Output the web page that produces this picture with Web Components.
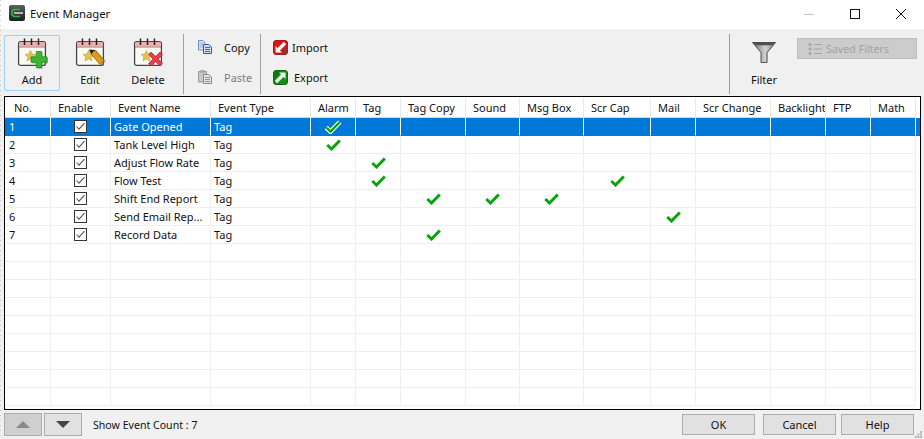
<!DOCTYPE html>
<html><head><meta charset="utf-8">
<style>
html,body{margin:0;padding:0;height:100%;background:#f0f0f0;overflow:hidden}
body{font:11px "Noto Sans","Open Sans",sans-serif;color:#111}
</style></head><body>
<event-manager></event-manager>
<script>
const CAL=`<rect x="1.6" y="3.6" width="26.800" height="23.800" rx="2" fill="#fbfbf6" stroke="#444" stroke-width="1.300"/><rect x="2.300" y="4.300" width="25.400" height="4.400" fill="#f4a9a9"/><path d="M2 9.100H28" stroke="#666" stroke-width=".7"/><path d="M7.500 .5v6.500M14.500 .5v6.500M21.500 .5v6.500" stroke="#222" stroke-width="1.500"/><path d="M13.500 12.500l1.700 3.500 3.800.5-2.800 2.600.8 3.800-3.500-1.900-3.500 1.900.8-3.800-2.800-2.600 3.800-.5z" fill="#e8c24a" stroke="#b3902a" stroke-width=".5"/>`;
const PLUS="M19.300 14h5.400v5.300H30v5.400h-5.300V30h-5.400v-5.300H14v-5.400h5.300z";
const ICONS={
add:`<svg width="31" height="31" viewBox="0 0 31 31">${CAL}<path d="${PLUS}" transform="translate(.8 .8)" fill="#777" opacity=".6"/><path d="${PLUS}" transform="translate(0 -.5)" fill="#3fb52f" stroke="#1f8a1f" stroke-width=".8"/></svg>`,
edit:`<svg width="31" height="31" viewBox="0 0 31 31">${CAL}<path d="M16.500 15l4-3.500 9.500 11-4.500 4.500z" transform="translate(.8 .8)" fill="#777" opacity=".5"/><path d="M16 16l4-4 9 10.500-4 4z" fill="#e39a12" stroke="#8a5a08" stroke-width=".8"/><path d="M16 16l-2-4.500 6 .5z" fill="#222"/></svg>`,
del:`<svg width="31" height="31" viewBox="0 0 31 31">${CAL}<path d="M16 16.500l2.500-2.500 4 4 4-4 2.500 2.500-4 4 4 4-2.500 2.500-4-4-4 4-2.500-2.500 4-4z" transform="translate(.8 .8)" fill="#777" opacity=".5"/><path d="M15.500 16.500l2.500-2.500 4.500 4.500L27 14l2.500 2.500-4.500 4.500 4.500 4.500L27 28l-4.500-4.500L18 28l-2.500-2.500L20 21z" fill="#e8404a" stroke="#b3242c" stroke-width=".7"/></svg>`,
copy:`<svg width="14" height="14" viewBox="0 0 14 14"><path d="M.5.500h4.500l2 2V10H.5z" fill="#dfe8f6" stroke="#6f8fc4"/><path d="M1.500 3h4M1.500 5h4M1.500 7h4" stroke="#6f8fc4" stroke-width=".7"/><path d="M5.500 4.500h5l3 2.500v6.500h-8z" fill="#cfdcf2" stroke="#2a5caa"/><path d="M7 7.500h5M7 9.500h5M7 11.500h5" stroke="#2a5caa" stroke-width=".9"/></svg>`,
paste:`<svg width="14" height="14" viewBox="0 0 14 14"><path d="M.5 1.500h8V12H.5z" fill="#c9c9c9" stroke="#999"/><path d="M2.500 0h4v3h-4z" fill="#aaa"/><path d="M5.500 4.500h5l3 2.500v6.500h-8z" fill="#e6e6e6" stroke="#888"/><path d="M7 7.500h5M7 9.500h5M7 11.500h5" stroke="#888" stroke-width=".9"/></svg>`,
imp:`<svg width="15" height="15" viewBox="0 0 15 15"><rect x=".5" y=".5" width="14" height="14" rx="2.500" fill="#dc1414" stroke="#a01a1a"/><path d="M14.500 4v8.500l-2 2H6z" fill="#a32a2a"/><path d="M12 3L5.500 9.500" stroke="#fff" stroke-width="3.200"/><path d="M2.500 12.500V6l6.500 6.500z" fill="#fff"/></svg>`,
exp:`<svg width="15" height="15" viewBox="0 0 15 15"><rect x=".5" y=".5" width="14" height="14" rx="2.500" fill="#129012" stroke="#0c6a0c"/><path d="M.5 11V2.500l2-2H9z" fill="#0a7a0a"/><path d="M3 12L9.500 5.500" stroke="#f4f8f4" stroke-width="3.200"/><path d="M12.500 2.500V9L6 2.500z" fill="#f4f8f4"/></svg>`,
filter:`<svg width="25" height="22" viewBox="0 0 25 22" style="margin-top:4px;display:block"><defs><linearGradient id="fg" x1="0" x2="1"><stop offset="0" stop-color="#6c6c6c"/><stop offset=".55" stop-color="#d0d0d0"/><stop offset="1" stop-color="#8a8a8a"/></linearGradient></defs><path d="M1 1h23l-8.500 10v10h-1V11z" fill="#bbb" opacity=".6"/><path d="M.5.500h23L15 10.500v10H9v-10z" fill="url(#fg)" stroke="#444" stroke-width=".9"/><path d="M1.500.8h21L20 3.200H4z" fill="#4e4e4e"/></svg>`,
list:`<svg width="14" height="14" viewBox="0 0 14 14"><g fill="#a6a6a6"><circle cx="2" cy="2.500" r="1.500"/><circle cx="2" cy="7" r="1.500"/><circle cx="2" cy="11.500" r="1.500"/><rect x="6" y="2" width="8" height="1"/><rect x="6" y="6.500" width="8" height="1"/><rect x="6" y="11" width="8" height="1"/></g></svg>`
};
function def(name,css,html,extra={}){
  const t=document.createElement('template');
  t.innerHTML=`<style>${css}</style>${html}`;
  customElements.define(name,class extends HTMLElement{
    constructor(){super();this.attachShadow({mode:'open'}).appendChild(t.content.cloneNode(true));}
    connectedCallback(){extra.init&&extra.init.call(this);}
  });
}
def('title-bar',`:host{display:flex;align-items:flex-start;height:29px;background:#fff;font-size:11.3px;color:#111}
.ico{width:16px;height:16px;margin:5px 5px 0 9px;line-height:0}
.t{flex:1;line-height:16px;padding-top:6px}.c{display:flex;height:27px}
.b{width:46px;display:flex;align-items:center;justify-content:center}`,
`<span class="ico"><svg width="16" height="16" viewBox="0 0 16 16"><defs><linearGradient id="ti" x1="0" y1="0" x2="0" y2="1"><stop offset="0" stop-color="#5c5f5c"/><stop offset="1" stop-color="#1d1f1d"/></linearGradient></defs><rect width="16" height="16" rx="2" fill="url(#ti)"/><path d="M11 4.500H6.500Q2.800 4.500 2.800 8T6.500 11.500H11" fill="none" stroke="#27b84a" stroke-width="1.600"/><rect x="5" y="7" width="9" height="2" fill="#b5b5b5"/></svg></span><span class="t"><slot></slot></span>
<span class="c"><span class="b"><svg width="10" height="10"><path d="M0 5.500h10" stroke="#c4c4c4"/></svg></span><span class="b"><svg width="10" height="10"><rect x=".5" y=".5" width="9" height="9" fill="none" stroke="#111"/></svg></span><span class="b"><svg width="10" height="10"><path d="M0 0l10 10M10 0L0 10" stroke="#111"/></svg></span></span>`);
def('big-btn',`:host{display:flex;flex-direction:column;align-items:center;width:56px;height:56px;box-sizing:border-box;border:1px solid transparent;border-radius:2px;margin-right:2px}
:host([focus]){border-color:#9fd0f3}
.i{height:29px;margin-top:2px;line-height:0}.l{margin-top:5px;line-height:15px}`,
`<span class="i"></span><span class="l"><slot></slot></span>`,{init(){this.shadowRoot.querySelector('.i').innerHTML=ICONS[this.getAttribute('icon')];}});
def('small-btn',`:host{display:flex;align-items:center;height:18px}
:host([off]){color:#7d7d7d}
.i{line-height:0;display:block}.l{white-space:nowrap}`,
`<span class="i"></span><span class="l"><slot></slot></span>`,{init(){this.shadowRoot.querySelector('.i').innerHTML=ICONS[this.getAttribute('icon')];this.shadowRoot.querySelector('.l').style.marginLeft=this.getAttribute('gap')+'px';}});
def('tool-sep',`:host{display:block;width:1px;height:60px;background:#a0a0a0;margin-top:-1px}`,``);
def('tool-bar',`:host{display:flex;align-items:flex-start;height:67px;box-sizing:border-box;padding:6px 0 0 4px}
.s{display:flex;flex-direction:column;gap:12px;padding-top:3px}
.g{flex:1}`,
`<big-btn icon="add" focus>Add</big-btn><big-btn icon="edit">Edit</big-btn><big-btn icon="del" style="margin-right:7px">Delete</big-btn>
<tool-sep></tool-sep>
<div class="s" style="padding-left:14px;width:62px"><small-btn icon="copy" gap="12">Copy</small-btn><small-btn icon="paste" gap="12" off>Paste</small-btn></div>
<tool-sep></tool-sep>
<div class="s" style="padding-left:12px"><small-btn icon="imp" gap="4">Import</small-btn><small-btn icon="exp" gap="6">Export</small-btn></div>
<div class="g"></div>
<tool-sep></tool-sep>
<big-btn icon="filter" style="margin-left:6px;margin-right:5px">Filter</big-btn>
<saved-filters></saved-filters>`);
def('saved-filters',`:host{display:flex;align-items:center;width:120px;height:21px;box-sizing:border-box;margin:3px 7px 0 0;background:#cccccc;border:1px solid #bdbdbd;color:#a3a3a3;padding-left:10px;gap:4px;font-size:10.7px;white-space:nowrap}`,
`<span id="i" style="line-height:0"></span><span>Saved Filters</span>`,{init(){this.shadowRoot.getElementById('i').innerHTML=ICONS.list;}});
const COLS=[46,60,100,100,45,45,65,54,64,67,45,75,55,45,45];
const HEAD=['No.','Enable','Event Name','Event Type','Alarm','Tag','Tag Copy','Sound','Msg Box','Scr Cap','Mail','Scr Change','Backlight','FTP','Math'];
const DATA=[['Gate Opened',[4]],['Tank Level High',[4]],['Adjust Flow Rate',[5]],['Flow Test',[5,9]],['Shift End Report',[6,7,8]],['Send Email Rep...',[10]],['Record Data',[6]]];
const TICK=`<svg width="15" height="12" viewBox="0 0 15 12"><path d="M1.300 6L5.500 10 13.800 1.500" fill="none" stroke="#0aa30a" stroke-width="3"/></svg>`;
const TICKS=`<svg width="18" height="14" viewBox="0 0 18 14"><path d="M2.200 7.500L6.500 11.600 15.800 2" fill="none" stroke="#fff" stroke-width="4.600"/><path d="M2.200 7.500L6.500 11.600 15.800 2" fill="none" stroke="#0aa30a" stroke-width="2.400"/></svg>`;
const BOX=`<svg width="13" height="13" viewBox="0 0 13 13"><rect x=".5" y=".5" width="12" height="12" fill="#fff" stroke="#333"/><path d="M2.500 6.500l2.500 2.700 5.500-6" fill="none" stroke="#555" stroke-width="1.100"/></svg>`;
def('event-grid',`:host{display:block;height:314px;margin:0 3px 0 4px;box-sizing:border-box;border:1px solid #000;background:#fff;overflow:hidden}
.r{display:grid;grid-template-columns:${COLS.map(c=>c+'px').join(' ')};height:18px;box-sizing:border-box}
.r>span{border-right:1px solid #efefef;border-bottom:1px solid #efefef;box-sizing:border-box;white-space:nowrap;overflow:hidden;display:flex;align-items:center;padding-left:3px;line-height:17px}
.r>span:first-child{padding-left:4px}
.h{height:21px;padding-top:1px;background:#fff}.h>span{border-right:1px solid #e8e8e8;border-bottom:1px solid #d8d8d8;justify-content:flex-start;padding-left:7px;height:20px}
.r.h>span:first-child{padding-left:9px}
.sel{background:#0078d7;color:#fff}.sel>span{border-right:1px solid #fff;border-bottom-color:#0078d7}
.c{justify-content:center;padding-left:0!important}`,`<div id="g"></div>`,{init(){
  let h=`<div class="r h">${HEAD.map(x=>`<span>${x}</span>`).join('')}</div>`;
  for(let i=0;i<16;i++){const d=DATA[i];let cells='';
    for(let c=0;c<15;c++){
      let v='',cl='';
      if(d){ if(c==0)v=i+1; if(c==1){v=BOX;cl='c';} if(c==2){v=d[0];} if(c==3)v='Tag';
        if(d[1].includes(c)){v=i==0?TICKS:TICK;cl='c';}}
      cells+=`<span class="${cl}">${v}</span>`;
    }
    h+=`<div class="r${i==0?' sel':''}">${cells}</div>`;
  }
  this.shadowRoot.getElementById('g').innerHTML=h;
}});
def('arrow-btn',`:host{display:flex;align-items:center;justify-content:center;width:38px;height:23px;box-sizing:border-box;background:#e1e1e1;border:1px solid #adadad;margin-top:3px}
:host([off]){background:#cfcfcf}`,`<slot></slot>`);
def('push-btn',`:host{display:flex;align-items:center;justify-content:center;width:73px;height:21px;box-sizing:border-box;background:#e1e1e1;border:1px solid #adadad}`,`<slot></slot>`);
def('foot-bar',`:host{display:flex;align-items:flex-start;height:29px;box-sizing:border-box;padding:0 0 0 4px;position:relative}
.t{margin-left:11px;flex:1;font-size:10.6px;line-height:16px;padding-top:7px}.bs{display:flex;margin:4px 10px 0 0}.sp{width:2px}
.grip{position:absolute;right:2px;bottom:1px;line-height:0}`,
`<arrow-btn off><svg width="14" height="7"><path d="M0 7L7 0l7 7z" fill="#8a8a8a"/></svg></arrow-btn><span class="sp"></span><arrow-btn><svg width="14" height="7"><path d="M0 0h14L7 7z" fill="#444"/></svg></arrow-btn><span class="t"><slot></slot></span>
<span class="bs"><push-btn>OK</push-btn><push-btn style="margin-left:8px">Cancel</push-btn><push-btn style="margin-left:5px">Help</push-btn></span>
<span class="grip"><svg width="7" height="7"><g fill="#b8b8b8"><rect x="5" y="0" width="2" height="2"/><rect x="2.500" y="2.500" width="2" height="2"/><rect x="5" y="2.500" width="2" height="2"/><rect x="0" y="5" width="2" height="2"/><rect x="2.500" y="5" width="2" height="2"/><rect x="5" y="5" width="2" height="2"/></g></svg></span>`);
def('event-manager',`:host{display:block;position:relative;width:924px;height:439px;background:#f0f0f0}
.edge{position:absolute;left:0;top:0;bottom:0;width:1px;background:repeating-linear-gradient(to bottom,#c8c8c8 0 1px,transparent 1px 5px)}`,
`<title-bar>Event Manager</title-bar><tool-bar></tool-bar><event-grid></event-grid><foot-bar>Show Event Count : 7</foot-bar><span class="edge"></span>`);
</script></body></html>
